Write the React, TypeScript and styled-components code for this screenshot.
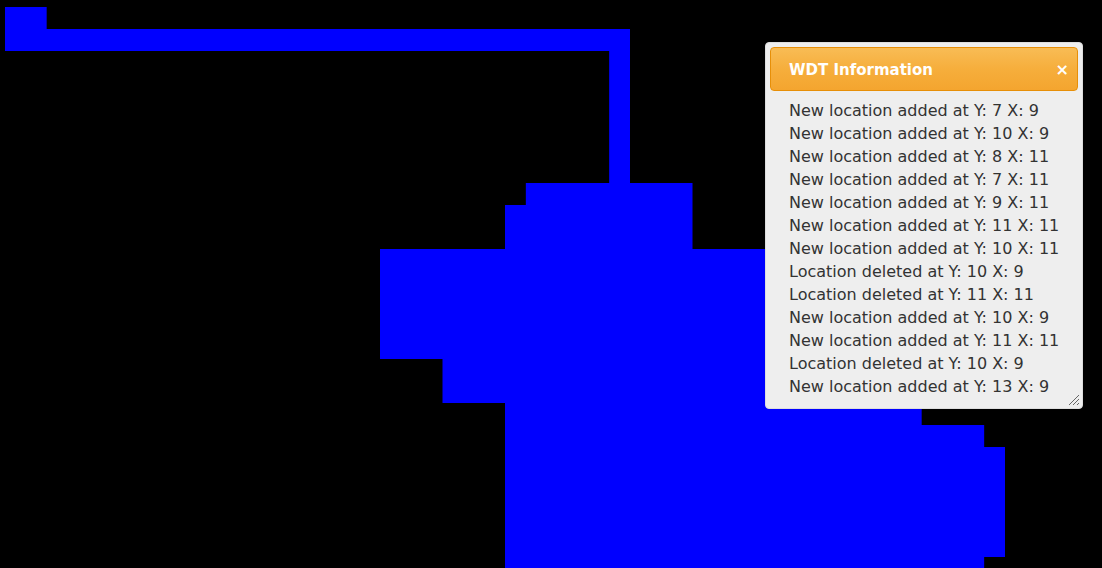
import React from 'react';
import styled, { createGlobalStyle } from 'styled-components';

const GlobalStyle = createGlobalStyle`
  html, body {
    margin: 0;
    padding: 0;
    background: #000;
    overflow: hidden;
  }
  #root {
    width: 1102px;
    height: 568px;
  }
`;

const Stage = styled.div`
  position: relative;
  width: 1102px;
  height: 568px;
  background: #000;
  overflow: hidden;
`;

const Board = styled.svg`
  display: block;
`;

const Dialog = styled.div`
  position: absolute;
  left: 765px;
  top: 42px;
  width: 318px;
  height: 367px;
  box-sizing: border-box;
  padding: 4px;
  background: #eeeeee;
  border: 1px solid #dddddd;
  border-radius: 4px;
  font-family: 'DejaVu Sans', 'Open Sans', sans-serif;
  display: flex;
  flex-direction: column;
`;

const TitleBar = styled.div`
  height: 44px;
  box-sizing: border-box;
  display: flex;
  align-items: center;
  justify-content: space-between;
  padding: 2px 8px 0 18px;
  border: 1px solid #e78f08;
  border-radius: 4px;
  background: linear-gradient(#f8bc55, #f6ae3c 50%, #f4a52f);
  color: #ffffff;
`;

const Title = styled.span`
  font-size: 15px;
  font-weight: 700;
`;

const Close = styled.span`
  font-size: 16px;
  font-weight: 700;
  line-height: 1;
`;

const Log = styled.ul`
  list-style: none;
  margin: 0;
  padding: 8px 18px 0 19px;
`;

const Entry = styled.li`
  font-size: 16px;
  line-height: 23px;
  color: #333333;
  white-space: nowrap;
`;

const Grip = styled.svg`
  position: absolute;
  right: 2px;
  bottom: 2px;
`;

const W = 1000 / 48;
const H = 22;
const X0 = 5;
const Y0 = 7;

// [col0, row0, col1, row1]
const blocks: [number, number, number, number][] = [
  [0, 0, 2, 1],
  [0, 1, 30, 2],
  [29, 2, 30, 8],
  [25, 8, 33, 9],
  [24, 9, 33, 11],
  [18, 11, 44, 16],
  [21, 16, 44, 18],
  [24, 18, 44, 19],
  [24, 19, 47, 20],
  [24, 20, 48, 25],
  [24, 25, 47, 27],
];

const entries = [
  'New location added at Y: 7 X: 9',
  'New location added at Y: 10 X: 9',
  'New location added at Y: 8 X: 11',
  'New location added at Y: 7 X: 11',
  'New location added at Y: 9 X: 11',
  'New location added at Y: 11 X: 11',
  'New location added at Y: 10 X: 11',
  'Location deleted at Y: 10 X: 9',
  'Location deleted at Y: 11 X: 11',
  'New location added at Y: 10 X: 9',
  'New location added at Y: 11 X: 11',
  'Location deleted at Y: 10 X: 9',
  'New location added at Y: 13 X: 9',
];

const App: React.FC = () => (
  <Stage>
    <GlobalStyle />
    <Board width={1102} height={568} viewBox="0 0 1102 568">
      {blocks.map(([c0, r0, c1, r1], i) => (
        <rect
          key={i}
          x={X0 + c0 * W}
          y={Y0 + r0 * H}
          width={(c1 - c0) * W}
          height={(r1 - r0) * H}
          fill="#0000ff"
        />
      ))}
    </Board>
    <Dialog>
      <TitleBar>
        <Title>WDT Information</Title>
        <Close>×</Close>
      </TitleBar>
      <Log>
        {entries.map((e, i) => (
          <Entry key={i}>{e}</Entry>
        ))}
      </Log>
      <Grip width={12} height={12} viewBox="0 0 12 12">
        <g stroke="#666" strokeWidth={1}>
          <line x1={1} y1={11} x2={11} y2={1} />
          <line x1={5} y1={11} x2={11} y2={5} />
          <line x1={9} y1={11} x2={11} y2={9} />
        </g>
      </Grip>
    </Dialog>
  </Stage>
);

export default App;
